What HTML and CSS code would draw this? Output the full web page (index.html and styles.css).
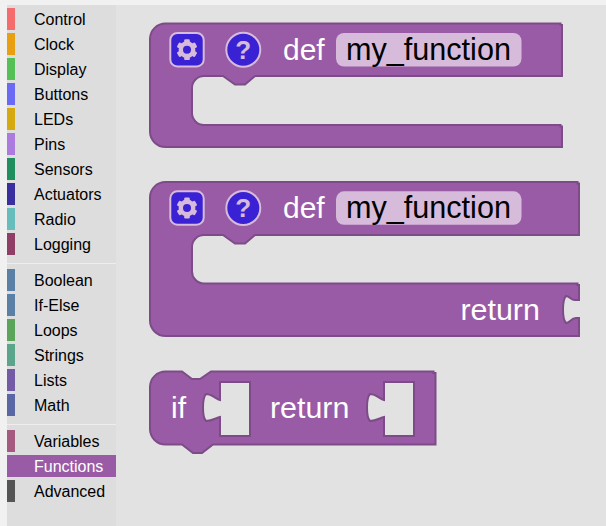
FILE: index.html
```html
<!DOCTYPE html>
<html lang="en">
<head>
<meta charset="utf-8">
<title>Functions</title>
<link rel="stylesheet" href="styles.css">
</head>
<body>
<div class="app">
  <nav class="toolbox">
    <div class="item"><span class="swatch c-control"></span><span class="label">Control</span></div>
    <div class="item"><span class="swatch c-clock"></span><span class="label">Clock</span></div>
    <div class="item"><span class="swatch c-display"></span><span class="label">Display</span></div>
    <div class="item"><span class="swatch c-buttons"></span><span class="label">Buttons</span></div>
    <div class="item"><span class="swatch c-leds"></span><span class="label">LEDs</span></div>
    <div class="item"><span class="swatch c-pins"></span><span class="label">Pins</span></div>
    <div class="item"><span class="swatch c-sensors"></span><span class="label">Sensors</span></div>
    <div class="item"><span class="swatch c-actuators"></span><span class="label">Actuators</span></div>
    <div class="item"><span class="swatch c-radio"></span><span class="label">Radio</span></div>
    <div class="item"><span class="swatch c-logging"></span><span class="label">Logging</span></div>
    <div class="sep"></div>
    <div class="item"><span class="swatch c-boolean"></span><span class="label">Boolean</span></div>
    <div class="item"><span class="swatch c-boolean"></span><span class="label">If-Else</span></div>
    <div class="item"><span class="swatch c-loops"></span><span class="label">Loops</span></div>
    <div class="item"><span class="swatch c-strings"></span><span class="label">Strings</span></div>
    <div class="item"><span class="swatch c-lists"></span><span class="label">Lists</span></div>
    <div class="item"><span class="swatch c-math"></span><span class="label">Math</span></div>
    <div class="sep"></div>
    <div class="item"><span class="swatch c-variables"></span><span class="label">Variables</span></div>
    <div class="item selected"><span class="swatch c-functions"></span><span class="label">Functions</span></div>
    <div class="item"><span class="swatch c-advanced"></span><span class="label">Advanced</span></div>
  </nav>
  <main class="workspace">
    <svg class="canvas" width="490" height="521" viewBox="116 5 490 521" xmlns="http://www.w3.org/2000/svg">
      <defs>
        <g id="gear">
          <circle class="gear-ring" cx="0" cy="0" r="6.2"/>
          <rect class="gear-tooth" x="-2.8" y="-10.4" width="5.6" height="5.5" rx="1.2"/>
          <rect class="gear-tooth" x="-2.8" y="-10.4" width="5.6" height="5.5" rx="1.2" transform="rotate(60)"/>
          <rect class="gear-tooth" x="-2.8" y="-10.4" width="5.6" height="5.5" rx="1.2" transform="rotate(120)"/>
          <rect class="gear-tooth" x="-2.8" y="-10.4" width="5.6" height="5.5" rx="1.2" transform="rotate(180)"/>
          <rect class="gear-tooth" x="-2.8" y="-10.4" width="5.6" height="5.5" rx="1.2" transform="rotate(240)"/>
          <rect class="gear-tooth" x="-2.8" y="-10.4" width="5.6" height="5.5" rx="1.2" transform="rotate(300)"/>
        </g>
      </defs>

      <!-- def block -->
      <path class="block" d="M150 38.5A15.5 15.5 0 0 1 165.5 23.5H560.5V25H562V76H255L245 84.5H235L223 76H204A12 12 0 0 0 192 88V113A12 12 0 0 0 204 125H560.5V126.5H562V147H165.5A15.5 15.5 0 0 1 150 131.5Z"/>
      <rect class="btn" x="170.3" y="33" width="33.4" height="33.4" rx="7"/>
      <use href="#gear" x="187" y="49.7"/>
      <circle class="btn" cx="243.3" cy="49.7" r="17"/>
      <text class="help" x="243.3" y="59">?</text>
      <text class="word" x="283" y="60">def</text>
      <rect class="field" x="336" y="33" width="185.5" height="33.5" rx="8"/>
      <text class="name" x="346" y="60">my_function</text>

      <!-- def with return block -->
      <path class="block" d="M150 197A15.5 15.5 0 0 1 165.5 182H577.5V183.5H579V235H255L245 243.5H235L223 235H204A12 12 0 0 0 192 247V271A12 12 0 0 0 204 283.5H577.5V285H579V300H576C571 301 570 296 566 296C562 300 562 319 566 323C570 323 571 318 576 318H579V336H165.5A15.5 15.5 0 0 1 150 320.5Z"/>
      <rect class="btn" x="170.3" y="191.3" width="33.4" height="33.4" rx="7"/>
      <use href="#gear" x="187" y="208"/>
      <circle class="btn" cx="243.3" cy="208" r="17"/>
      <text class="help" x="243.3" y="217.3">?</text>
      <text class="word" x="283" y="218">def</text>
      <rect class="field" x="336" y="191.3" width="185.5" height="33.5" rx="8"/>
      <text class="name" x="346" y="218">my_function</text>
      <text class="word wide" x="460.5" y="320">return</text>

      <!-- if return block -->
      <path class="block even" d="M150 386.5A15.5 15.5 0 0 1 165.5 371.5H182L192 379H200L211 371.5H433.5V373H435.5V444.5H213L202 453H193L182 444.5H165.5A15.5 15.5 0 0 1 150 429Z
        M220 382H250V436H220V417C216 418 212 421 206 421C202 417 202 398 206 394C212 394 216 399 220 400Z
        M384 382H414V436H384V417C380 418 376 421 370 421C366 417 366 398 370 394C376 394 380 399 384 400Z"/>
      <text class="word" x="171" y="418">if</text>
      <text class="word wide" x="270" y="418">return</text>
    </svg>
  </main>
</div>
</body>
</html>
```
FILE: styles.css
```css
* { box-sizing: border-box; }
html, body { margin: 0; height: 100%; }
body {
  background: #f1f1f1;
  padding: 5px 0 0 7px;
  overflow: hidden;
  font-family: "Liberation Sans", Arial, sans-serif;
}
.app { display: flex; height: 100%; }
.toolbox {
  width: 109px;
  flex: none;
  background: #dddddd;
  padding-top: 3px;
}
.item {
  display: flex;
  height: 22px;
  margin-bottom: 3px;
  font-size: 16px;
  line-height: 24px;
  color: #000;
}
.swatch { width: 8px; flex: none; }
.label { margin-left: 19px; white-space: nowrap; }
.sep { height: 1px; margin: 8px 0 5px; background: #eeeeee; }
.selected { background: #995ba5; color: #fff; }
.c-control { background: #f46c6c; }
.c-clock { background: #e8a012; }
.c-display { background: #55c055; }
.c-buttons { background: #6a6af5; }
.c-leds { background: #d4aa10; }
.c-pins { background: #ab7be0; }
.c-sensors { background: #1f8f5f; }
.c-actuators { background: #3a2f9f; }
.c-radio { background: #67bcbc; }
.c-logging { background: #8f3f65; }
.c-boolean { background: #5b80a5; }
.c-loops { background: #5ba55b; }
.c-strings { background: #5ba58c; }
.c-lists { background: #745ba5; }
.c-math { background: #5b67a5; }
.c-variables { background: #a55b80; }
.c-functions { background: #995ba5; }
.c-advanced { background: #555555; }
.workspace { flex: 1; background: #e2e2e2; min-width: 0; }
.canvas { display: block; }
.block { fill: #995ba5; stroke: #7d4c88; stroke-width: 2; }
.even { fill-rule: evenodd; }
.btn { fill: #3a22d4; stroke: #d6bbdb; stroke-width: 2; }
.gear-ring { fill: none; stroke: #d6bbdb; stroke-width: 4.4; }
.gear-tooth { fill: #d6bbdb; }
.help {
  fill: #d6bbdb;
  font: bold 26px "Liberation Sans", Arial, sans-serif;
  text-anchor: middle;
}
.word { fill: #fff; font: 30px "Liberation Sans", Arial, sans-serif; }
.wide { font-size: 30.4px; }
.field { fill: #d6bbdb; }
.name { fill: #000; font: 30.6px "Liberation Sans", Arial, sans-serif; }
```
